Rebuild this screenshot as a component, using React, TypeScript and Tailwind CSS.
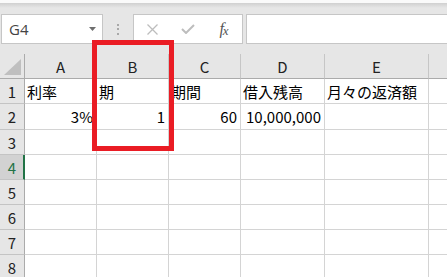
import React from "react";

type Cell = { t: string; right?: boolean };
type Row = { n: number; h: string; cells: Cell[]; sel?: boolean };

const colW = ["w-[72px]", "w-[72px]", "w-[72px]", "w-[84px]", "w-[104px]"];
const colL = ["A", "B", "C", "D", "E"];

const rows: Row[] = [
  {
    n: 1,
    h: "h-[25px]",
    cells: [{ t: "利率" }, { t: "期" }, { t: "期間" }, { t: "借入残高" }, { t: "月々の返済額" }],
  },
  {
    n: 2,
    h: "h-[26px]",
    cells: [
      { t: "3%", right: true },
      { t: "1", right: true },
      { t: "60", right: true },
      { t: "10,000,000", right: true },
      { t: "" },
    ],
  },
  { n: 3, h: "h-[25px]", cells: [] },
  { n: 4, h: "h-[25px]", cells: [], sel: true },
  { n: 5, h: "h-[25px]", cells: [] },
  { n: 6, h: "h-[25px]", cells: [] },
  { n: 7, h: "h-[25px]", cells: [] },
  { n: 8, h: "h-[25px]", cells: [] },
];

const cellFont = { fontFamily: '"Noto Sans CJK JP", "Noto Sans", sans-serif' };

export default function App() {
  return (
    <div className="relative w-[447px] h-[277px] overflow-hidden bg-[#e6e6e6]" style={cellFont}>
      {/* top strip */}
      <div className="h-[3px] bg-[#fafafa]" />
      <div className="h-[5px] bg-linear-to-b from-[#d0d0d0] to-[#e6e6e6]" />

      {/* formula bar */}
      <div className="flex h-[30px] mt-[6px]">
        <div className="ml-[1px] w-[102px] bg-white border border-[#c6c6c6] flex items-center pl-[7px] pr-[6px]">
          <span
            className="flex-1 text-[15px] text-[#444] leading-none"
            style={{ fontFamily: '"Open Sans", "Noto Sans", sans-serif' }}
          >
            G4
          </span>
          <svg width="7" height="4" viewBox="0 0 7 4">
            <polygon points="0,0 7,0 3.5,4" fill="#6e6e6e" />
          </svg>
        </div>
        <div className="w-[30px] flex flex-col items-center justify-center gap-[2.5px]">
          <div className="w-[2px] h-[2px] bg-[#a8a8a8]" />
          <div className="w-[2px] h-[2px] bg-[#a8a8a8]" />
          <div className="w-[2px] h-[2px] bg-[#a8a8a8]" />
        </div>
        <div className="w-[110px] bg-white border border-[#c6c6c6] flex">
          <div className="w-[36px] flex items-center justify-center">
            <svg width="11" height="11" viewBox="0 0 11 11">
              <path d="M0.5 0.5 L10.5 10.5 M10.5 0.5 L0.5 10.5" stroke="#bdbdbd" strokeWidth="1.3" />
            </svg>
          </div>
          <div className="w-[36px] flex items-center justify-center">
            <svg width="14" height="10" viewBox="0 0 14 10">
              <path d="M1 5 L5 9 L13 1" stroke="#bdbdbd" strokeWidth="2" fill="none" />
            </svg>
          </div>
          <div
            className="w-[36px] flex items-center justify-center text-[#555] italic leading-none"
            style={{ fontFamily: '"Liberation Serif", serif' }}
          >
            <span className="text-[16px]">f</span>
            <span className="text-[13px] -ml-[1px] mt-[3px]">x</span>
          </div>
        </div>
        <div className="ml-[3px] flex-1 bg-white border border-r-0 border-[#c6c6c6]" />
      </div>

      {/* grid */}
      <div className="mt-[10px] flex flex-col">
        {/* header row */}
        <div className="flex h-[25px]">
          <div className="w-[25px] h-full border-r border-b border-[#ababab] flex items-end justify-center pb-[3px]">
            <svg width="17" height="16" viewBox="0 0 17 16">
              <polygon points="17,0 17,16 0,16" fill="#bfbfbf" />
            </svg>
          </div>
          {colL.map((l, i) => (
            <div
              key={l}
              className={`${colW[i]} h-full border-r border-r-[#c6c6c6] border-b border-b-[#ababab] flex items-center justify-center text-[15px] text-[#222] leading-none`}
            >
              {l}
            </div>
          ))}
          <div className="flex-1 h-full border-b border-[#ababab]" />
        </div>

        {rows.map((r) => (
          <div key={r.n} className={`flex ${r.h} bg-white`}>
            <div
              className={`w-[25px] h-full border-b border-b-[#c4c4c4] flex items-center justify-center text-[15px] leading-none ${
                r.sel
                  ? "bg-[#d2d2d2] border-r-2 border-r-[#217346] text-[#217346] pl-[1px]"
                  : "bg-[#e6e6e6] border-r border-r-[#ababab] text-[#222]"
              }`}
            >
              {r.n}
            </div>
            {colW.map((w, i) => {
              const c = r.cells[i];
              return (
                <div
                  key={i}
                  className={`${w} h-full border-r border-b border-[#d4d4d4] flex items-center px-[2px] text-[15px] text-black leading-none whitespace-nowrap ${
                    c && c.right ? "justify-end pr-[3px]" : "justify-start"
                  }`}
                >
                  {c ? c.t : ""}
                </div>
              );
            })}
            <div className="flex-1 h-full border-b border-[#d4d4d4]" />
          </div>
        ))}
      </div>

      {/* red highlight box */}
      <div className="absolute left-[92px] top-[40px] w-[82px] h-[111px] border-[5px] border-[#ea1c24]" />
    </div>
  );
}
